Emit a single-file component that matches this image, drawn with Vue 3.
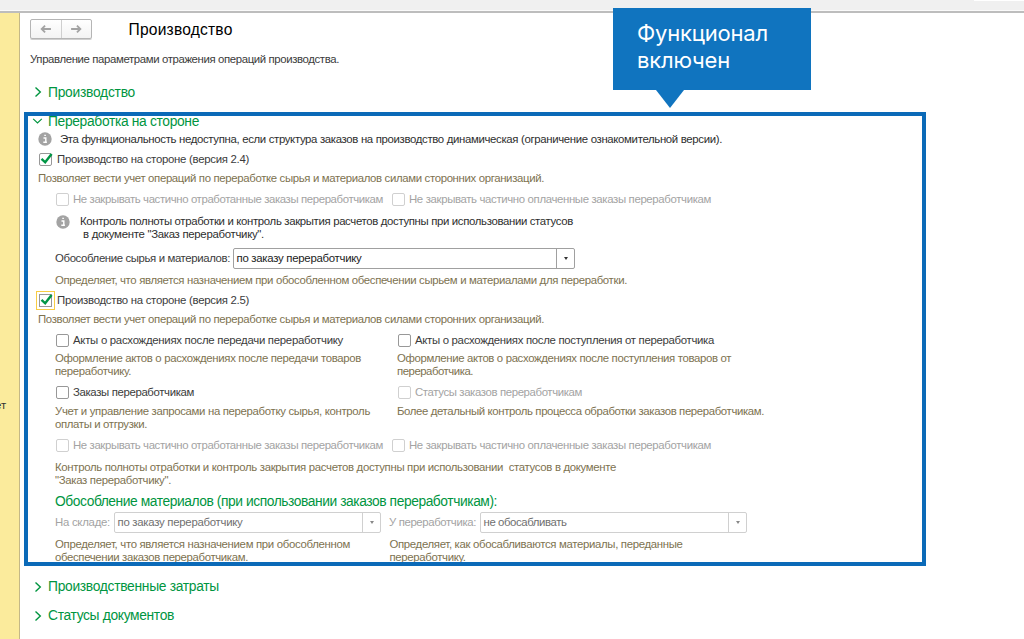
<script setup>
// v-span="px": tracks a line of text so that it covers the given width
const vSpan = {
  mounted(el, { value }) {
    el.style.letterSpacing = '0px'
    const natural = el.getBoundingClientRect().width
    el.style.letterSpacing = (value - natural) / el.textContent.length + 'px'
  },
}
</script>

<template>
  <div class="app">
    <div class="topbar"><span class="tab"></span></div>
    <div class="body">
      <aside class="side"><span>ет</span></aside>
      <main class="main">
        <header class="head">
          <div class="nav">
            <svg viewBox="0 0 31 20"><path d="M10.5 10H21M14.5 6.3L10.7 10l3.8 3.7" /></svg>
            <svg viewBox="0 0 31 20"><path d="M9.5 10H20M16 6.3l3.8 3.7-3.8 3.7" /></svg>
          </div>
          <h1><span v-span="104">Производство</span></h1>
        </header>
        <p class="intro"><span v-span="309">Управление параметрами отражения операций производства.</span></p>
        <h2 class="group first">
          <svg class="chev" viewBox="0 0 8 12"><path d="M1.5 1.5L6.3 6 1.5 10.5" /></svg>
          <span v-span="87">Производство</span>
        </h2>

        <section class="frame">
          <h2 class="open">
            <svg class="down" viewBox="0 0 12 8"><path d="M1.3 1.7L6 6.2l4.7-4.5" /></svg>
            <span v-span="151">Переработка на стороне</span>
          </h2>
          <div class="row info r28">
            <svg class="i" viewBox="0 0 14 14"><circle cx="7" cy="7" r="6.7" /><path d="M5.5 6h2.3v4.2M5.3 10.3h3.6M6.3 3.4h1.6" /></svg>
            <span v-span="662">Эта функциональность недоступна, если структура заказов на производство динамическая (ограничение ознакомительной версии).</span>
          </div>
          <div class="row main-check r13">
            <i class="box"><svg viewBox="0 0 13 13"><path d="M2.5 5.8L6.2 9.3 12.6 1" /></svg></i>
            <span v-span="192">Производство на стороне (версия 2.4)</span>
          </div>
          <div class="row hint outer r24"><span v-span="506">Позволяет вести учет операций по переработке сырья и материалов силами сторонних организаций.</span></div>
          <div class="row inner off r18">
            <i class="box"></i><span class="c1" v-span="310">Не закрывать частично отработанные заказы переработчикам</span>
            <i class="box second"></i><span v-span="302">Не закрывать частично оплаченные заказы переработчикам</span>
          </div>
          <div class="row info nested r39">
            <svg class="i" viewBox="0 0 14 14"><circle cx="7" cy="7" r="6.7" /><path d="M5.5 6h2.3v4.2M5.3 10.3h3.6M6.3 3.4h1.6" /></svg>
            <div class="lines">
              <div><span v-span="493">Контроль полноты отработки и контроль закрытия расчетов доступны при использовании статусов</span></div>
              <div class="shift"><span v-span="181">в документе "Заказ переработчику".</span></div>
            </div>
          </div>
          <div class="row field r22">
            <label><span v-span="175">Обособление сырья и материалов:</span></label>
            <div class="select wide"><b><span v-span="125">по заказу переработчику</span></b><em></em></div>
          </div>
          <div class="row hint sub r22"><span v-span="572">Определяет, что является назначением при обособленном обеспечении сырьем и материалами для переработки.</span></div>
          <div class="row main-check r19">
            <i class="box focus"><svg viewBox="0 0 13 13"><path d="M2.5 5.8L6.2 9.3 12.6 1" /></svg></i>
            <span v-span="192">Производство на стороне (версия 2.5)</span>
          </div>
          <div class="row hint outer r19"><span v-span="506">Позволяет вести учет операций по переработке сырья и материалов силами сторонних организаций.</span></div>
          <div class="row cols r22">
            <div class="opt"><i class="box"></i><span v-span="270">Акты о расхождениях после передачи переработчику</span></div>
            <div class="opt"><i class="box"></i><span v-span="299">Акты о расхождениях после поступления от переработчика</span></div>
          </div>
          <div class="row cols hint r27">
            <div class="lines">
              <div><span v-span="306">Оформление актов о расхождениях после передачи товаров</span></div>
              <div><span v-span="76">переработчику.</span></div>
            </div>
            <div class="lines">
              <div><span v-span="334">Оформление актов о расхождениях после поступления товаров от</span></div>
              <div><span v-span="76">переработчика.</span></div>
            </div>
          </div>
          <div class="row cols r28">
            <div class="opt"><i class="box"></i><span v-span="121">Заказы переработчикам</span></div>
            <div class="opt off"><i class="box"></i><span v-span="167">Статусы заказов переработчикам</span></div>
          </div>
          <div class="row cols hint orders r23">
            <div class="lines">
              <div><span v-span="315">Учет и управление запросами на переработку сырья, контроль</span></div>
              <div><span v-span="92">оплаты и отгрузки.</span></div>
            </div>
            <div class="lines">
              <div><span v-span="367">Более детальный контроль процесса обработки заказов переработчикам.</span></div>
              <div>&nbsp;</div>
            </div>
          </div>
          <div class="row inner off r32">
            <i class="box"></i><span class="c1" v-span="310">Не закрывать частично отработанные заказы переработчикам</span>
            <i class="box second"></i><span v-span="302">Не закрывать частично оплаченные заказы переработчикам</span>
          </div>
          <div class="row hint sub r25">
            <div class="lines">
              <div><span v-span="561">Контроль полноты отработки и контроль закрытия расчетов доступны при использовании&nbsp; статусов в документе</span></div>
              <div><span v-span="116">"Заказ переработчику".</span></div>
            </div>
          </div>
          <h3><span v-span="442">Обособление материалов (при использовании заказов переработчикам):</span></h3>
          <div class="row pair off r19">
            <label><span v-span="55">На складе:</span></label>
            <div class="select stock"><b><span v-span="125">по заказу переработчику</span></b><em></em></div>
            <label class="who"><span v-span="87">У переработчика:</span></label>
            <div class="select proc"><b><span v-span="83">не обосабливать</span></b><em></em></div>
          </div>
          <div class="row cols last hint r37">
            <div class="lines">
              <div><span v-span="295">Определяет, что является назначением при обособленном</span></div>
              <div><span v-span="193">обеспечении заказов переработчикам.</span></div>
            </div>
            <div class="lines">
              <div><span v-span="293">Определяет, как обосабливаются материалы, переданные</span></div>
              <div><span v-span="76">переработчику.</span></div>
            </div>
          </div>
        </section>

        <h2 class="group costs">
          <svg class="chev" viewBox="0 0 8 12"><path d="M1.5 1.5L6.3 6 1.5 10.5" /></svg>
          <span v-span="171">Производственные затраты</span>
        </h2>
        <h2 class="group">
          <svg class="chev" viewBox="0 0 8 12"><path d="M1.5 1.5L6.3 6 1.5 10.5" /></svg>
          <span v-span="126">Статусы документов</span>
        </h2>
      </main>
    </div>
    <div class="callout"><span v-span="131">Функционал</span><br /><span v-span="93">включен</span></div>
  </div>
</template>

<style>
body { margin: 0; overflow: hidden; }
</style>

<style scoped>
* { box-sizing: border-box; }
.app {
  position: relative; width: 1024px; height: 639px; overflow: hidden; background: #fff;
  display: flex; flex-direction: column;
  font: 11.4px/13px "Liberation Sans", Arial, sans-serif; color: #3b3b3b; white-space: nowrap;
}
.topbar { height: 13px; flex: none; background: #f0f0f0; border-bottom: 2px solid #bdbdbd; box-shadow: inset 0 -1px #fafafa; display: flex; justify-content: flex-end; }
.tab { width: 50px; height: 1px; background: #fff; }
.body { flex: 1; display: flex; min-height: 0; }
.side { width: 20px; flex: none; background: #fbeb9c; border-right: 1px solid #c4b887; padding-top: 386px; color: #333; }
.side span { margin-left: -5px; }
.main { flex: 1; min-width: 0; display: flex; flex-direction: column; }
h1, h2, h3, p { margin: 0; font-weight: normal; }
.head { display: flex; align-items: center; height: 34px; padding-left: 10px; flex: none; }
.nav { display: flex; width: 62px; height: 20px; margin-top: -2px; border: 1px solid #b5b5b5; border-radius: 2px; background: linear-gradient(#fff, #f3f3f3); box-shadow: 0 1px #cfcfcf; }
.nav svg { width: 30px; height: 18px; flex: none; fill: none; stroke: #a3a3a3; stroke-width: 2; }
.nav svg + svg { border-left: 1px solid #cfcfcf; }
h1 { margin-left: 36.5px; font-size: 15.6px; line-height: 20px; color: #000; }
.intro { padding-left: 10px; height: 24px; line-height: 24px; flex: none; }
h2, h3 { color: #00953f; font-size: 13.8px; }
.group { display: flex; align-items: center; height: 29px; padding-left: 14px; flex: none; }
.group span { margin-left: 6px; }
.group.first { height: 41px; padding-top: 1px; }
.group.costs { margin-top: 6px; }
.chev { width: 8px; height: 12px; fill: none; stroke: #00953f; stroke-width: 1.4; }
.frame { width: 902px; height: 454px; flex: none; margin-left: 4px; border: 4px solid #0b6ab8; padding-top: 1px; overflow: hidden; }
.open { display: flex; align-items: center; height: 8px; padding-left: 4px; }
.down { width: 11px; height: 8px; margin-right: 5px; fill: none; stroke: #00953f; stroke-width: 1.3; }
.row { display: flex; align-items: center; }
.r13 { height: 13px; } .r18 { height: 18px; } .r19 { height: 19px; } .r22 { height: 22px; }
.r23 { height: 23px; } .r24 { height: 24px; } .r25 { height: 25px; } .r27 { height: 27px; }
.r28 { height: 28px; } .r32 { height: 32px; } .r37 { height: 37px; } .r39 { height: 39px; }
.info { padding-left: 10px; color: #2e2e2e; }
.i { width: 14px; height: 14px; margin-right: 8px; fill: #a3a3a3; flex: none; }
.i path { fill: none; stroke: #fff; stroke-width: 1.4; }
.nested { padding-left: 28px; }
.nested .i { margin: -12px 10px 0 0; }
.shift { padding-left: 3px; }
.lines { flex: none; }
.main-check { padding-left: 11px; }
.box { width: 13px; height: 13px; flex: none; border: 1px solid #989898; border-radius: 2px; background: #fff; margin-right: 5px; display: block; }
.inner .box, .opt .box { margin-right: 4px; }
.box svg { display: block; width: 13px; height: 13px; margin: -1px; fill: none; stroke: #009645; stroke-width: 2.4; overflow: visible; }
.focus { border-radius: 0; outline: 1px solid #f8cd44; outline-offset: 2px; }
.off { color: #a3a3a3; }
.off .box { border-color: #d0d0d0; }
.hint { color: #7d7250; }
.orders { margin: -1px 0 1px; }
.outer { padding-left: 10px; }
.sub { padding-left: 27px; }
.inner { padding-left: 28px; }
.inner .second { margin-left: 9px; }
.inner span { flex: none; }
.cols { display: grid; grid-template-columns: 342px auto; padding-left: 27px; align-items: center; }
.opt { display: flex; align-items: center; padding-left: 1px; }
.cols.last { grid-template-columns: 334.5px auto; }
.field, .pair { padding-left: 27px; }
.field label { width: 178px; }
.select { display: flex; height: 21px; flex: none; border: 1px solid #a0a0a0; border-radius: 2px; background: #fff; color: #222; }
.select b { flex: 1; font-weight: normal; line-height: 19px; padding-left: 2.5px; }
.select em { width: 18px; border-left: 1px solid #a0a0a0; display: flex; align-items: center; justify-content: center; }
.select em::after { content: ""; border: 2.5px solid transparent; border-top: 3px solid #333; border-bottom: 0; }
.wide { width: 342px; }
h3 { margin-top: 5px; height: 22px; line-height: 22px; padding-left: 27px; }
.off .select { border-color: #d0d0d0; color: #707070; }
.off .select em { border-color: #d0d0d0; }
.off .select em::after { border-top-color: #888; }
.pair label { width: 59px; flex: none; }
.pair .who { width: 91px; margin-left: 8px; }
.stock, .proc { width: 267px; }
.callout {
  position: absolute; left: 613px; top: 8px; width: 198px; height: 82px; padding: 12px 24px;
  background: #1074bf; color: #fff; font: 22px/27px Inter, "Liberation Sans", sans-serif;
}
.callout::after { content: ""; position: absolute; left: 43px; top: 82px; border: 14.5px solid transparent; border-top: 18px solid #1074bf; border-bottom: 0; }
</style>
